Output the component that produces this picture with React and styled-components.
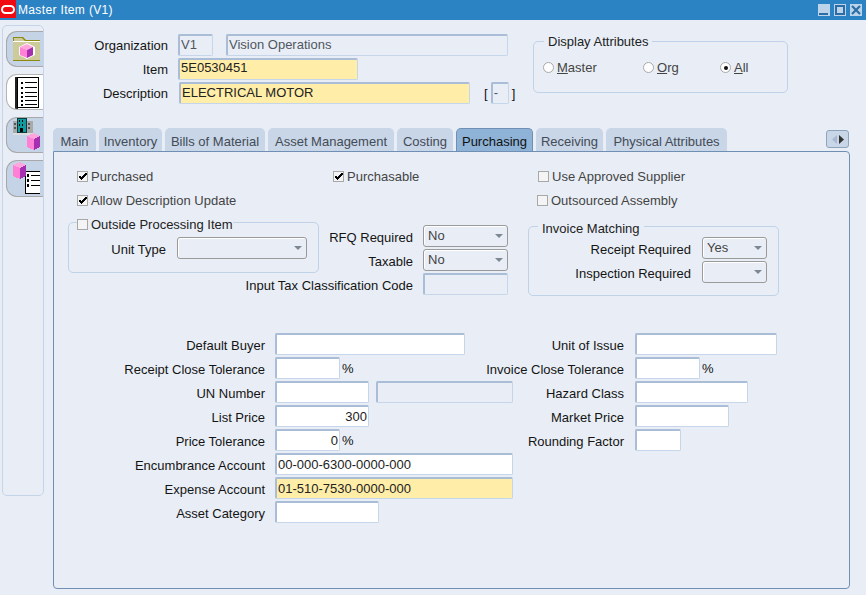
import React from 'react'
import styled, { createGlobalStyle } from 'styled-components'

const GlobalStyle = createGlobalStyle`
  html, body { margin: 0; padding: 0; background: #e9eef6; }
  body { font-family: "Liberation Sans", Arial, sans-serif; font-size: 13px; color: #111; }
  * { box-sizing: border-box; }
`

const Page = styled.div`
  width: 867px;
  height: 595px;
  overflow: hidden;
  background: #e9eef6;
  border-right: 1px solid #fff;
`

const TitleBar = styled.div`
  height: 20px;
  display: flex;
  align-items: center;
  background: #2b83c4;
  color: #fff;
  font-size: 12px;
  letter-spacing: 0.35px;
`

const Logo = styled.div`
  width: 16px;
  height: 18px;
  margin-right: 2px;
  align-self: flex-start;
  background: #f00b12;
  display: flex;
  align-items: center;
  justify-content: center;
`

const LogoRing = styled.div`
  width: 14px;
  height: 9px;
  border: 2px solid #fff;
  border-radius: 5px;
`

const WinButtons = styled.div`
  margin-left: auto;
  margin-right: 4px;
  display: flex;
  gap: 4px;
`

const WinButton = styled.div`
  width: 12px;
  height: 12px;
  background: #bcd3ea;
  display: flex;
  align-items: center;
  justify-content: center;
`

const Body = styled.div`
  display: flex;
  height: 575px;
`

const Sidebar = styled.div`
  width: 42px;
  height: 471px;
  margin: 5px 0 0 2px;
  padding-top: 5px;
  padding-left: 3px;
  border: 1px solid #c4d5e9;
  border-radius: 5px;
  display: flex;
  flex-direction: column;
  gap: 7px;
  flex: none;
`

const SideTab = styled.div`
  width: 37px;
  height: ${p => p.$h}px;
  flex: none;
  border: 1px solid ${p => (p.$active ? '#b4b4b4' : '#a8a8a8')};
  border-right: none;
  border-radius: 11px 0 0 11px;
  background: ${p => (p.$active ? '#fff' : '#c4d3e6')};
  overflow: hidden;
  padding-left: ${p => p.$px}px;
  padding-top: ${p => p.$py}px;
  svg { display: block; }
`

const Main = styled.div`
  width: 797px;
  margin-left: 9px;
  padding-top: 13px;
  flex: none;
`

const Header = styled.div`
  display: flex;
  height: 95px;
`

const HeaderFields = styled.div`
  width: 480px;
  flex: none;
`

const Row = styled.div`
  display: flex;
  align-items: center;
  height: 24px;
  gap: ${p => p.$gap ?? 10}px;
`

const Label = styled.div`
  flex: none;
  width: ${p => p.$w}px;
  padding-top: ${p => p.$pt ?? 2}px;
  display: flex;
  justify-content: flex-end;
  white-space: nowrap;
  color: #141414;
`

const Field = styled.input`
  flex: none;
  width: ${p => p.$w}px;
  height: 22px;
  margin: 0 ${p => p.$mr ?? 0}px 0 ${p => p.$ml ?? 0}px;
  padding: 0 1px ${p => p.$pb ?? 1}px 1px;
  outline: none;
  font: 13px "Liberation Sans", Arial, sans-serif;
  text-align: ${p => (p.$right ? 'right' : 'left')};
  color: ${p => (p.$kind === 'off' ? '#50565e' : '#222')};
  background: ${p => ({ req: '#ffeda8', off: '#e9eef6' }[p.$kind] || '#fff')};
  border-style: solid;
  border-width: 2px 1px 1px 2px;
  border-color: #a9bdd6 #c6d6ea #c6d6ea #a9bdd6;
  border-radius: 2px;
`

const Bracket = styled.div`
  display: flex;
  align-items: center;
  gap: 3px;
  margin-left: 14px;
`

const Group = styled.div`
  position: relative;
  flex: none;
  width: ${p => p.$w}px;
  height: ${p => p.$h}px;
  margin: ${p => p.$mt ?? 0}px 0 0 ${p => p.$ml ?? 0}px;
  border: 1px solid #c0d2e8;
  border-radius: 5px;
`

const Legend = styled.div`
  position: absolute;
  left: ${p => p.$x}px;
  top: ${p => p.$y}px;
  padding: 0 ${p => p.$pad ?? 4}px;
  background: #e9eef6;
  white-space: nowrap;
  color: #222;
  display: flex;
  align-items: center;
  gap: 3px;
`

const RadioRow = styled.div`
  display: flex;
  padding: 18px 0 0 9px;
`

const RadioItem = styled.div`
  flex: none;
  width: ${p => p.$w}px;
  display: flex;
  align-items: center;
  gap: 3px;
  color: #444;
`

const RadioDot = styled.span`
  width: 11px;
  height: 11px;
  flex: none;
  border-radius: 50%;
  border: 1px solid #a8a8a8;
  background: #fff;
  display: flex;
  align-items: center;
  justify-content: center;
  &::after {
    content: '';
    width: 4px;
    height: 4px;
    border-radius: 50%;
    background: ${p => (p.$on ? '#111' : 'transparent')};
  }
`

const TabRow = styled.div`
  display: flex;
  align-items: flex-end;
  gap: 3px;
  height: 23px;
`

const Tab = styled.div`
  flex: none;
  width: ${p => p.$w}px;
  height: 23px;
  padding-top: 3px;
  display: flex;
  align-items: center;
  justify-content: center;
  white-space: nowrap;
  border-radius: 5px 5px 0 0;
  color: ${p => (p.$active ? '#111' : '#444b55')};
  background: ${p => (p.$active ? '#8eb3d7' : '#c8d6e8')};
  border: 1px solid ${p => (p.$active ? '#6f90b4' : '#c8d6e8')};
  border-bottom: none;
`

const TabScroll = styled.div`
  width: 23px;
  height: 18px;
  margin: 0 1px 3px auto;
  flex: none;
  display: flex;
  align-items: center;
  justify-content: center;
  gap: 2px;
  background: #c8d6e8;
  border: 1px solid #8ea3bc;
  border-radius: 3px;
`

const Panel = styled.div`
  width: 797px;
  height: 438px;
  border: 1px solid #6f90b4;
  border-radius: 0 4px 4px 4px;
`

const CheckGrid = styled.div`
  display: grid;
  grid-template-columns: 256px 205px 1fr;
  grid-auto-rows: 24px;
  padding: 12px 0 0 23px;
`

const CheckItem = styled.div`
  display: flex;
  align-items: center;
  gap: 3px;
  color: #444;
  margin-left: ${p => p.$ml ?? 0}px;
`

const CheckBox = styled.span`
  width: 11px;
  height: 11px;
  flex: none;
  border: 1px solid #a8a8a8;
  background: #f4f4f4;
  position: relative;
  svg { position: absolute; left: 0; top: 0; }
`

const MiddleSection = styled.div`
  display: flex;
  padding: 10px 0 0 14px;
`

const MiddleColumn = styled.div`
  width: 189px;
  padding-top: 2px;
  flex: none;
`

const UnitRow = styled(Row)`
  padding: 14px 0 0 8px;
  height: auto;
`

const InvoiceBody = styled.div`
  padding-top: 9px;
`

const Select = styled.div`
  flex: none;
  width: ${p => p.$w}px;
  height: 22px;
  padding: 0 4px 1px 4px;
  display: flex;
  align-items: center;
  justify-content: space-between;
  color: #444;
  background: #e9eef6;
  border: 1px solid #9a9a9a;
  border-radius: 3px;
  box-shadow: inset 1px 1px 0 #fff;
  &::after {
    content: '';
    margin-left: auto;
    width: 0;
    height: 0;
    border-left: 4px solid transparent;
    border-right: 4px solid transparent;
    border-top: 4px solid #7e8794;
  }
`

const LowerForm = styled.div`
  padding-top: 36px;
`

const LowerRow = styled.div`
  display: grid;
  grid-template-columns: 211px 248px 111px auto;
  height: 24px;
  align-items: center;
`

const FieldCell = styled.div`
  display: flex;
  align-items: center;
  margin-left: ${p => p.$ml ?? 10}px;
  gap: 2px;
`

function Check({ on, ml, children }) {
  return (
    <CheckItem $ml={ml}>
      <CheckMark on={on} />
      {children}
    </CheckItem>
  )
}

function CheckMark({ on }) {
  return (
    <CheckBox>
      {on && (
        <svg width="10" height="10" viewBox="0 0 10 10" shapeRendering="crispEdges">
          <path d="M1 4h2v1h1V4h1V3h1V2h1V1h2v2H8v1H7v1H6v1H5v1H4v1H3V7H2V6H1z" fill="#000" />
        </svg>
      )}
    </CheckBox>
  )
}

// small magenta cube used by the tree icons
function Cube({ x, y, h = 17 }) {
  return (
    <g transform={`translate(${x} ${y})`}>
      <polygon points="7,0 13,3 7,6 0,3" fill="#ffa6dc" />
      <polygon points={`0,3 7,6 7,${h} 0,${h - 3}`} fill="#ff80d4" />
      <polygon points={`7,6 13,3 13,${h - 3} 7,${h}`} fill="#a52fb0" />
    </g>
  )
}

function FolderIcon() {
  return (
    <svg width="27" height="24" viewBox="0 0 27 24">
      <path d="M0 0h10l3 3h14v21H0z" fill="#cdcb9a" />
      <path d="M0 0h10l3 3h14v1H12L9 1H1v3H0z" fill="#8c8a10" />
      <rect x="0" y="4" width="27" height="1" fill="#fff" />
      <rect x="0" y="23" width="27" height="1" fill="#8c8a10" />
      <polygon points="14,6 22,10 22,18 14,22 6,18 6,10" fill="#fff" />
      <Cube x={7} y={7} h={14} />
    </svg>
  )
}

function ListIcon() {
  const rows = [5, 10, 15, 19, 23, 27]
  return (
    <svg width="25" height="32" viewBox="0 0 25 32" shapeRendering="crispEdges">
      <rect x="0" y="0" width="3" height="32" fill="#222" />
      <rect x="2.5" y="0.5" width="21" height="30" fill="#fff" stroke="#000" />
      {rows.map(y => (
        <g key={y}>
          <rect x="6" y={y} width="2" height="2" fill="#000" />
          <rect x="10" y={y} width="12" height="1" fill="#000" />
        </g>
      ))}
    </svg>
  )
}

function OrgIcon() {
  return (
    <svg width="27" height="33" viewBox="0 0 27 33" shapeRendering="crispEdges">
      <rect x="0" y="3" width="20" height="14" fill="#a9a9a9" />
      <rect x="1" y="5" width="2" height="2" fill="#555" />
      <rect x="1" y="9" width="2" height="2" fill="#555" />
      <rect x="15" y="5" width="2" height="2" fill="#555" />
      <rect x="15" y="9" width="2" height="2" fill="#555" />
      <rect x="0" y="15" width="20" height="2" fill="#ddd" />
      <rect x="4" y="0" width="9" height="14" fill="#119aa0" stroke="#0a3a3c" />
      <rect x="6" y="2" width="1" height="2" fill="#000" />
      <rect x="9" y="2" width="1" height="2" fill="#000" />
      <rect x="6" y="6" width="1" height="2" fill="#000" />
      <rect x="9" y="6" width="1" height="2" fill="#000" />
      <rect x="7" y="10" width="3" height="4" fill="#000" />
      <Cube x={14} y={15} />
    </svg>
  )
}

function StepsIcon() {
  const rows = [13, 18, 23]
  return (
    <svg width="27" height="33" viewBox="0 0 27 33" shapeRendering="crispEdges">
      <rect x="12.5" y="10.5" width="15" height="22" fill="#fff" stroke="#000" />
      {rows.map(y => (
        <g key={y}>
          <rect x="14" y={y} width="2" height="3" fill="#000" />
          <rect x="18" y={y + 1} width="9" height="1" fill="#000" />
        </g>
      ))}
      <Cube x={0} y={1} />
    </svg>
  )
}

function FormRow({ label, children, rightLabel, right }) {
  return (
    <LowerRow>
      <Label $w={211}>{label}</Label>
      <FieldCell>{children}</FieldCell>
      {rightLabel ? <Label $w={111}>{rightLabel}</Label> : <span />}
      {right && <FieldCell $ml={11}>{right}</FieldCell>}
    </LowerRow>
  )
}

const tabs = [
  ['Main', 43],
  ['Inventory', 63],
  ['Bills of Material', 100],
  ['Asset Management', 126],
  ['Costing', 56],
  ['Purchasing', 77],
  ['Receiving', 67],
  ['Physical Attributes', 121],
]

export default function App() {
  return (
    <Page>
      <GlobalStyle />
      <TitleBar>
        <Logo><LogoRing /></Logo>
        Master Item (V1)
        <WinButtons>
          <WinButton>
            <svg width="12" height="12" viewBox="0 0 12 12" shapeRendering="crispEdges"><rect x="1" y="9" width="9" height="2" fill="#2b6ea6" /></svg>
          </WinButton>
          <WinButton>
            <svg width="12" height="12" viewBox="0 0 12 12" shapeRendering="crispEdges"><path d="M1 1h10v10H1z M3 3v6h6V3z" fillRule="evenodd" fill="#2b6ea6" /></svg>
          </WinButton>
          <WinButton>
            <svg width="12" height="12" viewBox="0 0 12 12"><path d="M2 2l8 8M10 2l-8 8" stroke="#2b6ea6" strokeWidth="2.2" /></svg>
          </WinButton>
        </WinButtons>
      </TitleBar>
      <Body>
        <Sidebar>
          <SideTab $h={36} $px={6} $py={5}><FolderIcon /></SideTab>
          <SideTab $h={36} $active $px={8} $py={2}><ListIcon /></SideTab>
          <SideTab $h={36} $px={6} $py={0}><OrgIcon /></SideTab>
          <SideTab $h={37} $px={6} $py={0}><StepsIcon /></SideTab>
        </Sidebar>
        <Main>
          <Header>
            <HeaderFields>
              <Row>
                <Label $w={115} $pt={0}>Organization</Label>
                <Field $w={35} $mr={3} $pb={3} $kind="off" readOnly value="V1" />
                <Field $w={282} $pb={3} $kind="off" readOnly value="Vision Operations" />
              </Row>
              <Row>
                <Label $w={115} $pt={0}>Item</Label>
                <Field $w={180} $pb={4} $kind="req" readOnly value="5E0530451" />
              </Row>
              <Row $gap={0}>
                <Label $w={115} $pt={0}>Description</Label>
                <Field $w={291} $ml={11} $pb={3} $kind="req" readOnly value="ELECTRICAL MOTOR" />
                <Bracket>
                  [<Field $w={18} $pb={3} $kind="off" readOnly value="-" />]
                </Bracket>
              </Row>
            </HeaderFields>
            <Group $w={255} $h={52} $mt={8}>
              <Legend $x={10} $y={-8}>Display Attributes</Legend>
              <RadioRow>
                <RadioItem $w={100}><RadioDot /><span><u>M</u>aster</span></RadioItem>
                <RadioItem $w={77}><RadioDot /><span><u>O</u>rg</span></RadioItem>
                <RadioItem $w={60}><RadioDot $on /><span><u>A</u>ll</span></RadioItem>
              </RadioRow>
            </Group>
          </Header>
          <TabRow>
            {tabs.map(([name, w]) => (
              <Tab key={name} $w={w} $active={name === 'Purchasing'}>{name}</Tab>
            ))}
            <TabScroll>
              <svg width="5" height="9" viewBox="0 0 5 9"><path d="M5 0v9L0 4.5z" fill="#a9bad0" /></svg>
              <svg width="5" height="9" viewBox="0 0 5 9"><path d="M0 0v9l5-4.5z" fill="#333" /></svg>
            </TabScroll>
          </TabRow>
          <Panel>
            <CheckGrid>
              <Check on>Purchased</Check>
              <Check on>Purchasable</Check>
              <Check>Use Approved Supplier</Check>
              <Check on>Allow Description Update</Check>
              <span />
              <Check ml={-1}>Outsourced Assembly</Check>
            </CheckGrid>
            <MiddleSection>
              <Group $w={251} $h={51}>
                <Legend $x={8} $y={-6} $pad={0}><CheckMark />Outside Processing Item</Legend>
                <UnitRow $gap={11}>
                  <Label $w={89}>Unit Type</Label>
                  <Select $w={130} />
                </UnitRow>
              </Group>
              <MiddleColumn>
                <Row><Label $w={94}>RFQ Required</Label><Select $w={85}>No</Select></Row>
                <Row><Label $w={94}>Taxable</Label><Select $w={85}>No</Select></Row>
                <Row><Label $w={94}>Input Tax Classification Code</Label><Field $w={85} $kind="off" readOnly value="" /></Row>
              </MiddleColumn>
              <Group $w={251} $h={70} $ml={20} $mt={4}>
                <Legend $x={9} $y={-6}>Invoice Matching</Legend>
                <InvoiceBody>
                  <Row $gap={11}><Label $w={162}>Receipt Required</Label><Select $w={65}>Yes</Select></Row>
                  <Row $gap={11}><Label $w={162}>Inspection Required</Label><Select $w={65} /></Row>
                </InvoiceBody>
              </Group>
            </MiddleSection>
            <LowerForm>
              <FormRow label="Default Buyer" rightLabel="Unit of Issue" right={<Field $w={142} readOnly value="" />}>
                <Field $w={190} readOnly value="" />
              </FormRow>
              <FormRow label="Receipt Close Tolerance" rightLabel="Invoice Close Tolerance" right={<><Field $w={65} readOnly value="" />%</>}>
                <Field $w={65} readOnly value="" />%
              </FormRow>
              <FormRow label="UN Number" rightLabel="Hazard Class" right={<Field $w={113} readOnly value="" />}>
                <Field $w={94} $mr={5} readOnly value="" />
                <Field $w={137} $kind="off" readOnly value="" />
              </FormRow>
              <FormRow label="List Price" rightLabel="Market Price" right={<Field $w={94} readOnly value="" />}>
                <Field $w={94} $right readOnly value="300" />
              </FormRow>
              <FormRow label="Price Tolerance" rightLabel="Rounding Factor" right={<Field $w={46} readOnly value="" />}>
                <Field $w={65} $right readOnly value="0" />%
              </FormRow>
              <FormRow label="Encumbrance Account">
                <Field $w={238} readOnly value="00-000-6300-0000-000" />
              </FormRow>
              <FormRow label="Expense Account">
                <Field $w={238} $kind="req" readOnly value="01-510-7530-0000-000" />
              </FormRow>
              <FormRow label="Asset Category">
                <Field $w={104} readOnly value="" />
              </FormRow>
            </LowerForm>
          </Panel>
        </Main>
      </Body>
    </Page>
  )
}
